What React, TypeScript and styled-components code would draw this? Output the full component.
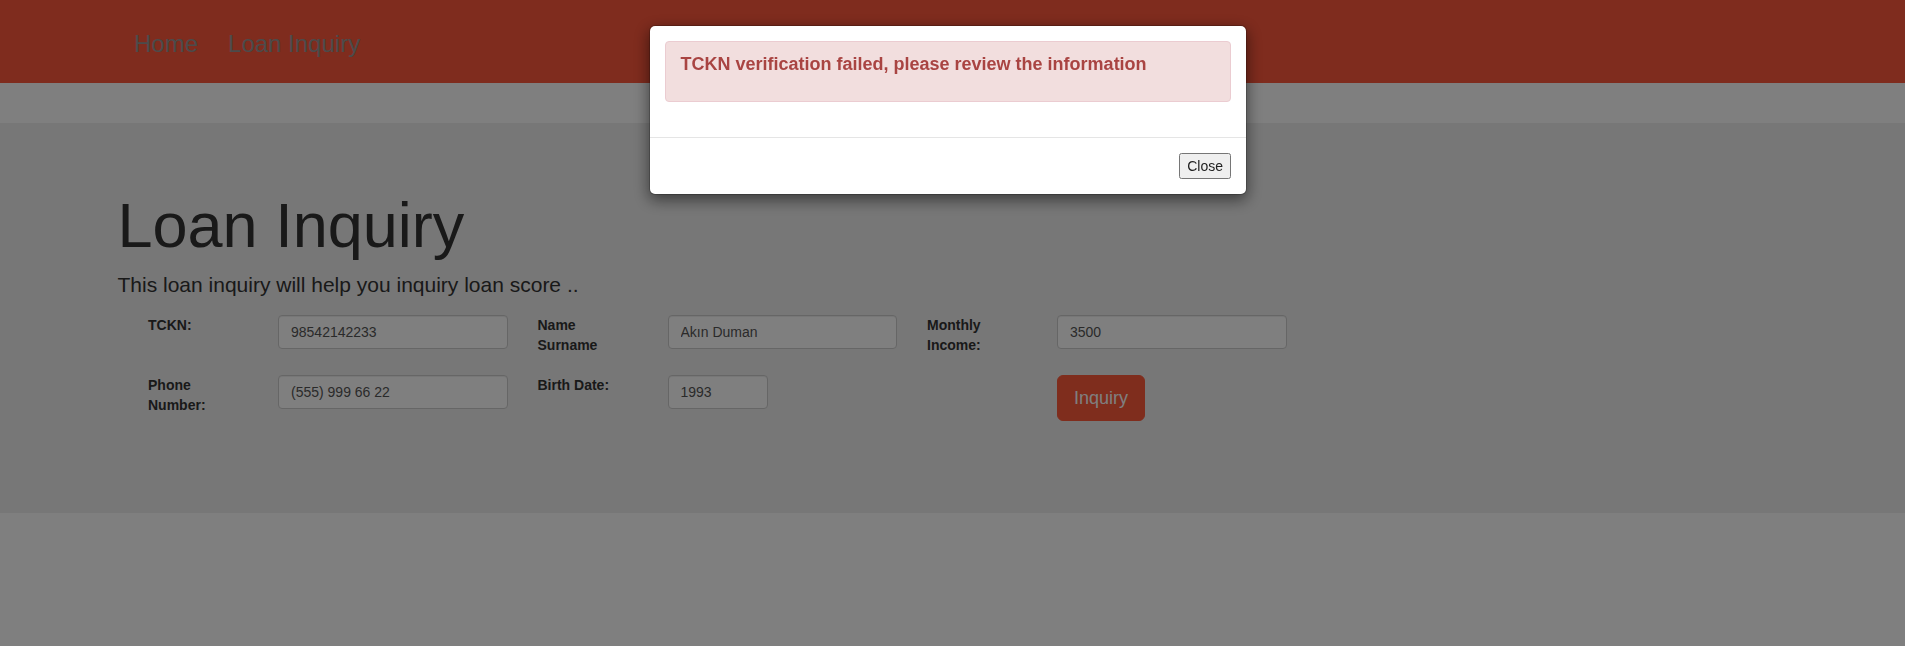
import React from "react";
import styled, { createGlobalStyle } from "styled-components";

const GlobalStyle = createGlobalStyle`
  * { box-sizing: border-box; }
  html, body { margin: 0; padding: 0; }
  body {
    font-family: "Liberation Sans", Arial, Helvetica, sans-serif;
    font-size: 14px;
    line-height: 1.42857143;
    color: #333;
    background: #fff;
  }
`;

const Navbar = styled.nav`
  height: 83px;
  background: #ff583c;
  margin-bottom: 40px;
  padding-left: 119px;
`;

const NavList = styled.ul`
  list-style: none;
  margin: 0;
  padding: 30px 0 0;
  display: flex;
`;

const NavLink = styled.a`
  display: block;
  padding: 0 15px;
  font-size: 24px;
  line-height: 28px;
  color: #969696;
  text-decoration: none;
`;

const Jumbotron = styled.section`
  background: #eee;
  padding: 48px 0 48px 117.5px;
`;

const Title = styled.h1`
  font-size: 63px;
  line-height: 1.1;
  font-weight: 400;
  margin: 20px 0 10px;
`;

const Lead = styled.p`
  font-size: 21px;
  margin: 0 0 15px;
`;

const Form = styled.form`
  margin-left: 15.5px;
  padding-bottom: 29px;
`;

const FormRow = styled.div`
  display: grid;
  grid-template-columns: 130px 259.5px 130px 259.5px 130px 259.5px;
  align-items: start;
  margin-bottom: 15px;
`;

const Cell = styled.div`
  padding: 0 15px;
`;

const Label = styled.label`
  display: block;
  font-weight: 700;
  line-height: 20px;
  margin-bottom: 5px;
`;

const Input = styled.input<{ $narrow?: boolean }>`
  display: block;
  width: ${(p) => (p.$narrow ? "100px" : "100%")};
  height: 34px;
  padding: 6px 12px;
  font: inherit;
  font-size: 14px;
  line-height: 1.42857143;
  color: #555;
  background: #fff;
  border: 1px solid #ccc;
  border-radius: 4px;
  box-shadow: inset 0 1px 1px rgba(0, 0, 0, 0.075);
  margin: 0;
`;

const PrimaryButton = styled.button`
  display: inline-block;
  margin: 0;
  padding: 10px 16px;
  font-family: inherit;
  font-size: 18px;
  line-height: 1.3333333;
  color: #fff;
  background: #ff5a3a;
  border: 1px solid #ff5a3a;
  border-radius: 6px;
  cursor: pointer;
`;

const Backdrop = styled.div`
  position: fixed;
  inset: 0;
  background: rgba(0, 0, 0, 0.5);
  z-index: 1040;
`;

const ModalDialog = styled.div`
  position: fixed;
  top: 25px;
  left: 648.5px;
  width: 598.5px;
  z-index: 1050;
`;

const ModalContent = styled.div`
  background: #fff;
  background-clip: padding-box;
  border: 1px solid rgba(0, 0, 0, 0.2);
  border-radius: 6px;
  box-shadow: 0 5px 15px rgba(0, 0, 0, 0.5);
`;

const ModalBody = styled.div`
  padding: 15px;
`;

const Alert = styled.div`
  padding: 13px 15px 16px;
  margin-bottom: 20px;
  border: 1px solid #ebccd1;
  border-radius: 4px;
  background: #f2dede;
  color: #a94442;
`;

const AlertHeading = styled.h4`
  margin: 0 0 10px;
  font-size: 18px;
  line-height: 1.1;
  font-weight: 700;
`;

const ModalFooter = styled.div`
  padding: 15px;
  text-align: right;
  border-top: 1px solid #e5e5e5;
`;

const CloseButton = styled.button`
  font: inherit;
  color: #222;
  margin: 0;
`;

export default function App() {
  return (
    <>
      <GlobalStyle />
      <Navbar>
        <NavList>
          <li>
            <NavLink href="#">Home</NavLink>
          </li>
          <li>
            <NavLink href="#">Loan Inquiry</NavLink>
          </li>
        </NavList>
      </Navbar>
      <Jumbotron>
        <Title>Loan Inquiry</Title>
        <Lead>This loan inquiry will help you inquiry loan score ..</Lead>
        <Form onSubmit={(e) => e.preventDefault()}>
          <FormRow>
            <Cell>
              <Label>TCKN:</Label>
            </Cell>
            <Cell>
              <Input defaultValue="98542142233" />
            </Cell>
            <Cell>
              <Label>Name Surname</Label>
            </Cell>
            <Cell>
              <Input defaultValue="Akın Duman" />
            </Cell>
            <Cell>
              <Label>Monthly Income:</Label>
            </Cell>
            <Cell>
              <Input defaultValue="3500" />
            </Cell>
          </FormRow>
          <FormRow>
            <Cell>
              <Label>Phone Number:</Label>
            </Cell>
            <Cell>
              <Input defaultValue="(555) 999 66 22" />
            </Cell>
            <Cell>
              <Label>Birth Date:</Label>
            </Cell>
            <Cell>
              <Input $narrow defaultValue="1993" />
            </Cell>
            <Cell />
            <Cell>
              <PrimaryButton type="submit">Inquiry</PrimaryButton>
            </Cell>
          </FormRow>
        </Form>
      </Jumbotron>
      <Backdrop />
      <ModalDialog role="dialog">
        <ModalContent>
          <ModalBody>
            <Alert>
              <AlertHeading>TCKN verification failed, please review the information</AlertHeading>
            </Alert>
          </ModalBody>
          <ModalFooter>
            <CloseButton type="button">Close</CloseButton>
          </ModalFooter>
        </ModalContent>
      </ModalDialog>
    </>
  );
}
